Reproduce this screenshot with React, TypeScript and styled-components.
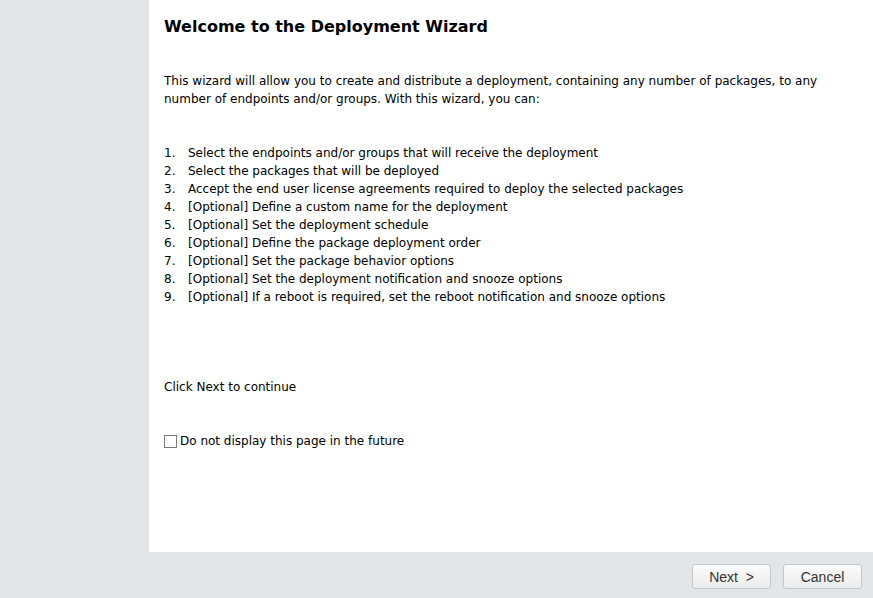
import React from "react";
import styled, { createGlobalStyle } from "styled-components";

const Global = createGlobalStyle`
  html, body { margin: 0; padding: 0; background: #e3e6e9; }
  #root { width: 873px; height: 598px; }
`;

const Frame = styled.div`
  width: 873px;
  height: 598px;
  display: grid;
  grid-template-columns: 149px 1fr;
  grid-template-rows: 552px 1fr;
  background: #e3e6e9;
  font-family: "DejaVu Sans", Verdana, sans-serif;
  color: #000;
`;

const Sidebar = styled.div`
  background: #e3e6e9;
`;

const Content = styled.div`
  background: #fff;
  padding: 17px 15px 0 15px;
  display: flex;
  flex-direction: column;
`;

const Title = styled.h1`
  margin: 0;
  font-size: 16px;
  font-weight: bold;
  line-height: 20px;
`;

const Para = styled.p<{ $top: number }>`
  margin: 0;
  font-size: 12px;
  line-height: 18px;
  margin-top: ${(p) => p.$top}px;
`;

const List = styled.ol`
  margin: 36px 0 0 0;
  padding: 0;
  list-style: none;
  font-size: 12px;
  line-height: 18px;
`;

const Item = styled.li`
  display: flex;
`;

const Num = styled.span`
  width: 24px;
  flex: none;
`;

const CheckRow = styled.label`
  margin-top: 36px;
  display: flex;
  align-items: center;
  font-size: 12px;
  line-height: 18px;
`;

const Box = styled.span`
  width: 11px;
  height: 11px;
  border: 1px solid #7a7a7a;
  background: #fff;
  margin-right: 3px;
`;

const Footer = styled.div`
  grid-column: 1 / 3;
  display: flex;
  justify-content: flex-end;
  align-items: flex-start;
  gap: 12px;
  padding: 12px 11px 0 0;
`;

const Button = styled.button`
  width: 79px;
  height: 25px;
  border: 1px solid #c4c6c8;
  border-radius: 3px;
  background: linear-gradient(#fbfbfb, #ececec);
  font-family: "Liberation Sans", Arial, sans-serif;
  font-size: 14px;
  color: #333;
  padding: 0;
`;

const steps = [
  "Select the endpoints and/or groups that will receive the deployment",
  "Select the packages that will be deployed",
  "Accept the end user license agreements required to deploy the selected packages",
  "[Optional] Define a custom name for the deployment",
  "[Optional] Set the deployment schedule",
  "[Optional] Define the package deployment order",
  "[Optional] Set the package behavior options",
  "[Optional] Set the deployment notification and snooze options",
  "[Optional] If a reboot is required, set the reboot notification and snooze options",
];

export default function App() {
  return (
    <>
      <Global />
      <Frame>
        <Sidebar />
        <Content>
          <Title>Welcome to the Deployment Wizard</Title>
          <Para $top={35}>
            This wizard will allow you to create and distribute a deployment, containing any number of packages, to any
            number of endpoints and/or groups. With this wizard, you can:
          </Para>
          <List>
            {steps.map((s, i) => (
              <Item key={i}>
                <Num>{i + 1}.</Num>
                <span>{s}</span>
              </Item>
            ))}
          </List>
          <Para $top={72}>Click Next to continue</Para>
          <CheckRow>
            <Box />
            Do not display this page in the future
          </CheckRow>
        </Content>
        <Footer>
          <Button>Next &nbsp;&gt;</Button>
          <Button>Cancel</Button>
        </Footer>
      </Frame>
    </>
  );
}
